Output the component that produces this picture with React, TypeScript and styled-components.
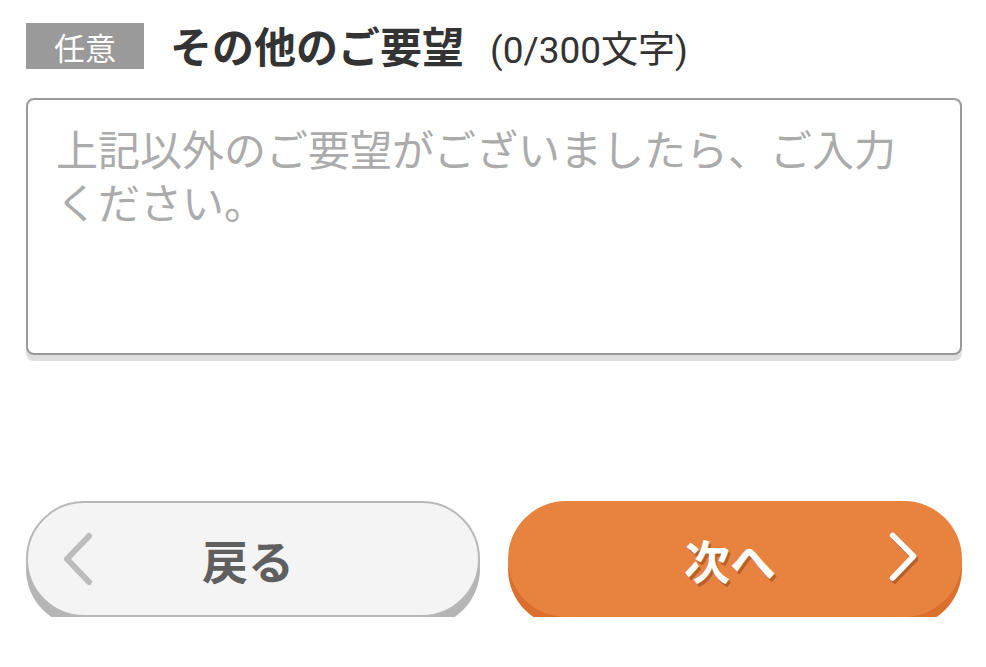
import React from "react";
import styled, { createGlobalStyle } from "styled-components";

const Global = createGlobalStyle`
  html, body { margin: 0; padding: 0; background: #ffffff; }
  body { font-family: Roboto, "Noto Sans CJK JP", sans-serif; }
  * { box-sizing: border-box; }
`;

const Page = styled.div`
  padding: 23px 24px 0 26px;
  display: flex;
  flex-direction: column;
`;

const Header = styled.div`
  display: flex;
  align-items: center;
  height: 46px;
`;

const Badge = styled.span`
  width: 118px;
  height: 46px;
  background: #9a9a9a;
  color: #ffffff;
  font-family: "Noto Sans CJK JP", sans-serif;
  font-size: 31px;
  display: flex;
  align-items: center;
  justify-content: center;
  flex: none;
`;

const TitleGroup = styled.div`
  display: flex;
  align-items: baseline;
  margin-left: 26px;
  gap: 26px;
`;

const Title = styled.h2`
  margin: 0;
  font-family: "Noto Sans CJK JP", sans-serif;
  font-weight: 700;
  font-size: 42px;
  line-height: 1;
  color: #333333;
`;

const Counter = styled.span`
  font-family: Roboto, "Noto Sans CJK JP", sans-serif;
  font-size: 37px;
  line-height: 1;
  color: #333333;
`;

const Field = styled.textarea`
  display: block;
  margin-top: 29px;
  width: 936px;
  height: 257px;
  border: 2px solid #999999;
  border-radius: 8px;
  box-shadow: 0 6px 0 #dedede;
  padding: 21px 26px 0 28px;
  font-family: "Noto Sans CJK JP", sans-serif;
  font-size: 42px;
  line-height: 53px;
  color: #333333;
  resize: none;
  outline: none;
  background: #ffffff;
  &::placeholder {
    color: #ababab;
  }
`;

const Actions = styled.div`
  display: grid;
  grid-template-columns: 1fr 1fr;
  gap: 28px;
  margin-top: 146px;
  width: 936px;
`;

const Button = styled.button<{ $primary?: boolean }>`
  height: 116px;
  border-radius: 58px;
  border: ${(p) => (p.$primary ? "none" : "2px solid #b8b8b8")};
  background: ${(p) => (p.$primary ? "#e8833f" : "#f4f4f4")};
  box-shadow: 0 10px 0 ${(p) => (p.$primary ? "#da6f2e" : "#b5b5b5")};
  display: grid;
  grid-template-columns: 34px 1fr 34px;
  align-items: center;
  padding: ${(p) => (p.$primary ? "0 40px 0 40px" : "0 33px 0 33px")};
  cursor: pointer;
`;

const Label = styled.span<{ $primary?: boolean }>`
  grid-column: 2;
  text-align: center;
  font-family: "Noto Sans CJK JP", sans-serif;
  font-weight: 700;
  font-size: 46px;
  line-height: 1;
  padding-right: 10px;
  color: ${(p) => (p.$primary ? "#ffffff" : "#5f5f5f")};
  text-shadow: ${(p) => (p.$primary ? "2px 3px 0 #b95f28" : "none")};
`;

const IconSlot = styled.span<{ $col: number }>`
  grid-column: ${(p) => p.$col};
  grid-row: 1;
  display: flex;
  align-items: center;
  justify-content: center;
`;

const BackChevron = () => (
  <svg width="32" height="54" viewBox="0 0 32 54">
    <polyline
      points="27,4 5,27 27,50"
      fill="none"
      stroke="#bcbcbc"
      strokeWidth="6"
      strokeLinecap="round"
      strokeLinejoin="round"
    />
  </svg>
);

const NextChevron = () => (
  <svg width="36" height="58" viewBox="0 0 36 58">
    <polyline
      points="7,7 29,29 7,52"
      fill="none"
      stroke="#b95f28"
      strokeWidth="6"
      strokeLinecap="round"
      strokeLinejoin="round"
    />
    <polyline
      points="5,4 27,26 5,49"
      fill="none"
      stroke="#ffffff"
      strokeWidth="6"
      strokeLinecap="round"
      strokeLinejoin="round"
    />
  </svg>
);

export default function App() {
  return (
    <>
      <Global />
      <Page>
        <Header>
          <Badge>任意</Badge>
          <TitleGroup>
            <Title>その他のご要望</Title>
            <Counter>(0/300文字)</Counter>
          </TitleGroup>
        </Header>
        <Field placeholder="上記以外のご要望がございましたら、ご入力ください。" />
        <Actions>
          <Button type="button">
            <IconSlot $col={1}>
              <BackChevron />
            </IconSlot>
            <Label>戻る</Label>
          </Button>
          <Button type="button" $primary>
            <Label $primary>次へ</Label>
            <IconSlot $col={3}>
              <NextChevron />
            </IconSlot>
          </Button>
        </Actions>
      </Page>
    </>
  );
}
